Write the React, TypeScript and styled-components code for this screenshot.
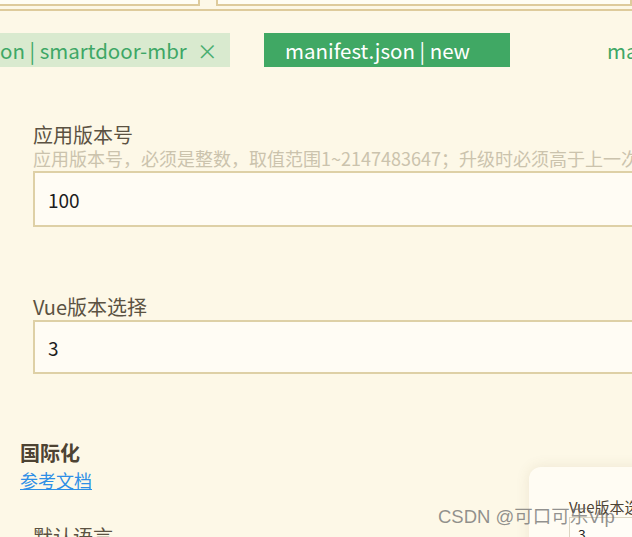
import styled, { createGlobalStyle } from "styled-components";

const GlobalStyle = createGlobalStyle`
  html, body {
    margin: 0;
    padding: 0;
    background: #fdf8e7;
  }
  * {
    box-sizing: border-box;
  }
`

const font = `"Microsoft YaHei", "Noto Sans CJK SC", "Noto Sans", sans-serif`

const Page = styled.div`
  position: relative;
  width: 632px;
  height: 537px;
  overflow: hidden;
  background: #fdf8e7;
  font-family: ${font};
`

const TopStrip = styled.div`
  display: flex;
  gap: 16px;
  height: 9px;
`

const TopBox = styled.div<{ $width?: number }>`
  flex: ${props => props.$width ? `0 0 ${props.$width}px` : '1'};
  height: 6px;
  background: #fffdf4;
  border: 2px solid #decb9c;
  border-top: none;
  ${props => props.$width && `border-left: none;`}
`

const Divider = styled.div`
  height: 2px;
  background: #decb9c;
`

const TabRow = styled.div`
  display: flex;
  align-items: stretch;
  height: 34px;
  margin-top: 22px;
  white-space: nowrap;
`

const Tab = styled.div<{ $active?: boolean; $open?: boolean }>`
  display: flex;
  align-items: center;
  flex: 0 0 auto;
  font-size: 20.5px;
  line-height: 34px;
  color: ${props => props.$active ? '#ffffff' : '#3ea766'};
  background: ${props => props.$active ? '#40a864' : props.$open ? '#d9eacf' : 'transparent'};
`

const FirstTab = styled(Tab)`
  width: 230px;
  padding-left: 0;
`

const ActiveTab = styled(Tab)`
  width: 246px;
  margin-left: 34px;
  padding-left: 21px;
`

const LastTab = styled(Tab)`
  margin-left: 97px;
`

const CloseMark = styled.span`
  margin-left: 10px;
  font-size: 21px;
  color: #4aae70;
`

const Form = styled.div`
  padding-left: 33px;
`

const Label = styled.div<{ $gap: number }>`
  margin-top: ${props => props.$gap}px;
  font-size: 20px;
  line-height: 24px;
  color: #5b5242;
  white-space: nowrap;
`

const Hint = styled.div`
  font-size: 18px;
  line-height: 22px;
  color: #cbc3ad;
  white-space: nowrap;
`

const Field = styled.div<{ $height: number; $gap: number }>`
  display: flex;
  align-items: center;
  margin-top: ${props => props.$gap}px;
  width: 620px;
  height: ${props => props.$height}px;
  padding-left: 13px;
  border: 2px solid #ded0a6;
  background: #fffcf4;
  font-size: 19px;
  color: #1d1d1d;
`

const SectionTitle = styled.div`
  margin-top: 66px;
  padding-left: 20px;
  font-size: 20px;
  line-height: 26px;
  font-weight: bold;
  color: #4d4333;
`

const DocLink = styled.a`
  display: inline-block;
  margin: 2px 0 0 20px;
  font-size: 18px;
  line-height: 24px;
  color: #2d8fe6;
  text-decoration: underline;
`

const FloatCard = styled.div`
  position: absolute;
  left: 529px;
  top: 467px;
  width: 200px;
  height: 120px;
  padding: 31px 0 0 40px;
  border-radius: 12px;
  background: #fffcf3;
  box-shadow: 0 0 14px rgba(120, 100, 60, 0.12);
`

const CardLabel = styled.div`
  font-size: 15px;
  line-height: 18px;
  color: #4d4333;
  white-space: nowrap;
`

const CardField = styled.div`
  margin-top: 1px;
  height: 30px;
  padding: 6px 0 0 8px;
  border: 1px solid #ddd6c2;
  background: #fffdf7;
  font-size: 14px;
  color: #222;
`

const Watermark = styled.div`
  position: absolute;
  left: 438px;
  top: 505px;
  font-family: "Liberation Sans", "Noto Sans CJK SC", sans-serif;
  font-size: 18.5px;
  line-height: 24px;
  color: rgba(110, 110, 110, 0.75);
  white-space: nowrap;
  pointer-events: none;
`

export default function App() {
  return (
    <Page>
      <GlobalStyle />
      <TopStrip>
        <TopBox $width={200} />
        <TopBox />
      </TopStrip>
      <Divider />
      <TabRow>
        <FirstTab $open>
          on | smartdoor-mbr
          <CloseMark>×</CloseMark>
        </FirstTab>
        <ActiveTab $active>manifest.json | new</ActiveTab>
        <LastTab>manifest.json</LastTab>
      </TabRow>
      <Form>
        <Label $gap={56}>应用版本号</Label>
        <Hint>应用版本号，必须是整数，取值范围1~2147483647；升级时必须高于上一次设置的值。</Hint>
        <Field $height={56} $gap={2}>100</Field>
        <Label $gap={68}>Vue版本选择</Label>
        <Field $height={54} $gap={1}>3</Field>
      </Form>
      <SectionTitle>国际化</SectionTitle>
      <DocLink href="#">参考文档</DocLink>
      <Form>
        <Label $gap={32}>默认语言</Label>
      </Form>
      <FloatCard>
        <CardLabel>Vue版本选择</CardLabel>
        <CardField>3</CardField>
      </FloatCard>
      <Watermark>CSDN @可口可乐Vip</Watermark>
    </Page>
  )
}
